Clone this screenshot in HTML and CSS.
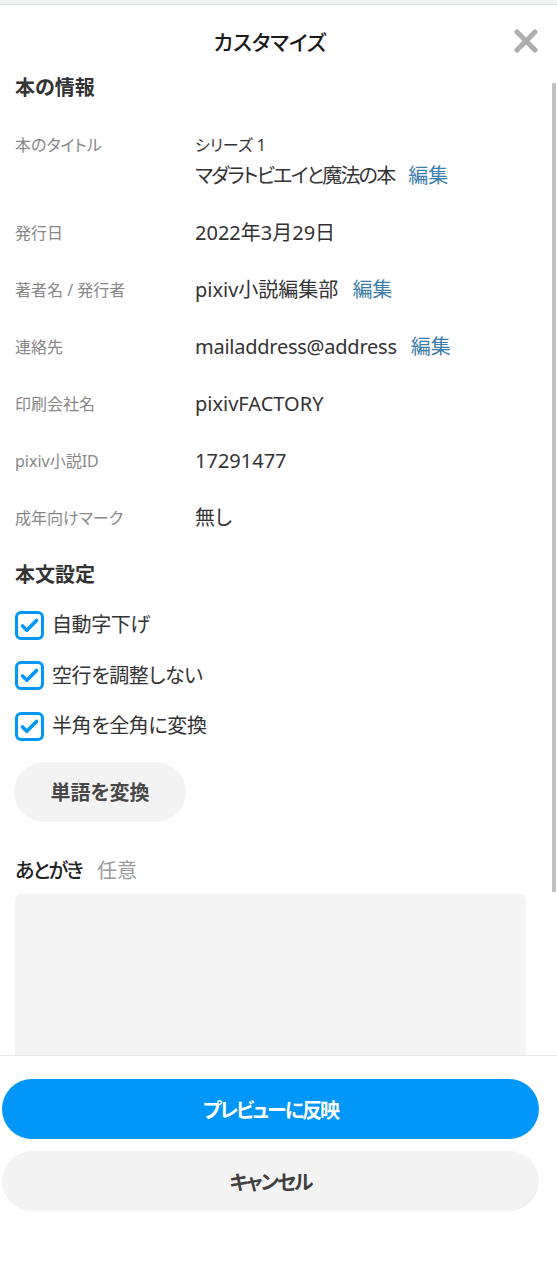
FILE: index.html
```html
<!DOCTYPE html>
<html lang="ja">
<head>
<meta charset="utf-8">
<title>カスタマイズ</title>
<link rel="stylesheet" href="styles.css">
</head>
<body>
<div class="topband"></div>
<div class="modal">
  <header class="modal-header">
    <span></span>
    <h1 class="modal-title">カスタマイズ</h1>
    <button class="close-btn" aria-label="閉じる">
      <svg width="26" height="24" viewBox="0 0 26 24"><path d="M4 3 L22 21 M22 3 L4 21" stroke="#adadad" stroke-width="5" stroke-linecap="round" fill="none"/></svg>
    </button>
  </header>
  <main class="modal-body">
    <div class="scroll-thumb"></div>
    <h2 class="section-title">本の情報</h2>
    <dl class="info">
      <div class="info-row">
        <dt class="info-label">本のタイトル</dt>
        <dd class="info-value">
          <div class="series">シリーズ 1</div>
          <div class="title-line"><span class="kana-tight">マダラトビエイと魔法の本</span><a class="edit">編集</a></div>
        </dd>
      </div>
      <div class="info-row">
        <dt class="info-label">発行日</dt>
        <dd class="info-value">2022年3月29日</dd>
      </div>
      <div class="info-row">
        <dt class="info-label">著者名 / 発行者</dt>
        <dd class="info-value">pixiv小説編集部<a class="edit">編集</a></dd>
      </div>
      <div class="info-row">
        <dt class="info-label">連絡先</dt>
        <dd class="info-value"><span class="latin-tight">mailaddress@address</span><a class="edit">編集</a></dd>
      </div>
      <div class="info-row">
        <dt class="info-label">印刷会社名</dt>
        <dd class="info-value">pixivFACTORY</dd>
      </div>
      <div class="info-row">
        <dt class="info-label">pixiv小説ID</dt>
        <dd class="info-value">17291477</dd>
      </div>
      <div class="info-row">
        <dt class="info-label">成年向けマーク</dt>
        <dd class="info-value">無し</dd>
      </div>
    </dl>

    <h2 class="section-title section-gap">本文設定</h2>
    <ul class="checks">
      <li class="check-row">
        <span class="checkbox"><svg width="23" height="23" viewBox="0 0 23 23"><path d="M4.5 12 L8.8 16.2 L18.5 6.5" stroke="#0096fa" stroke-width="3.6" stroke-linecap="round" stroke-linejoin="round" fill="none"/></svg></span>
        <span class="check-text">自動字下げ</span>
      </li>
      <li class="check-row">
        <span class="checkbox"><svg width="23" height="23" viewBox="0 0 23 23"><path d="M4.5 12 L8.8 16.2 L18.5 6.5" stroke="#0096fa" stroke-width="3.6" stroke-linecap="round" stroke-linejoin="round" fill="none"/></svg></span>
        <span class="check-text">空行を調整しない</span>
      </li>
      <li class="check-row">
        <span class="checkbox"><svg width="23" height="23" viewBox="0 0 23 23"><path d="M4.5 12 L8.8 16.2 L18.5 6.5" stroke="#0096fa" stroke-width="3.6" stroke-linecap="round" stroke-linejoin="round" fill="none"/></svg></span>
        <span class="check-text">半角を全角に変換</span>
      </li>
    </ul>
    <button class="pill pill-small">単語を変換</button>

    <h2 class="afterword-title"><span class="kana-tight">あとがき</span><span class="optional">任意</span></h2>
    <textarea class="afterword"></textarea>
  </main>
  <footer class="modal-footer">
    <button class="pill pill-primary">プレビューに反映</button>
    <button class="pill pill-secondary">キャンセル</button>
  </footer>
</div>
</body>
</html>
```

FILE: styles.css
```css
* { box-sizing: border-box; }

html, body {
  margin: 0;
  padding: 0;
  height: 100%;
}

body {
  font-family: "Noto Sans", "Noto Sans CJK JP", sans-serif;
  font-feature-settings: "palt";
  color: #333333;
  background: #ffffff;
  display: flex;
  flex-direction: column;
  overflow: hidden;
}

.topband {
  height: 5px;
  flex: none;
  background: #f1f2f2;
  border-bottom: 1px solid #e2e3e3;
}

.modal {
  flex: 1;
  min-height: 0;
  display: flex;
  flex-direction: column;
}

.modal-header {
  flex: none;
  height: 64px;
  padding: 23px 0 0 0;
  display: grid;
  grid-template-columns: 1fr auto 1fr;
  align-items: start;
}

.modal-title {
  margin: 0 0 0 -17px;
  font-size: 21px;
  line-height: 28px;
  font-weight: 500;
  color: #1a1a1a;
}

.close-btn {
  justify-self: end;
  margin: 1px 18px 0 0;
  padding: 0;
  width: 26px;
  height: 24px;
  border: none;
  background: none;
  display: flex;
}

.modal-body {
  flex: 1;
  min-height: 0;
  overflow: hidden;
  position: relative;
  padding: 5px 31px 0 15px;
}

.scroll-thumb {
  position: absolute;
  right: 1px;
  top: 14px;
  width: 4px;
  height: 809px;
  background: #c1c1c1;
}

.section-title {
  margin: 0 0 14px;
  font-size: 20px;
  line-height: 28px;
  font-weight: 700;
  color: #333333;
}

.section-gap {
  margin-top: 15px;
  margin-bottom: 11px;
}

.info {
  margin: 0;
}

.info-row {
  display: grid;
  grid-template-columns: 180px 1fr;
  padding: 15px 0 14px;
}

.info-label {
  font-size: 16px;
  line-height: 28px;
  color: #878787;
}

.info-value {
  margin: 0;
  font-size: 20px;
  line-height: 28px;
  color: #333333;
}

.series {
  font-size: 16px;
  line-height: 28px;
}

.title-line {
  margin-top: 3px;
}

.kana-tight {
  letter-spacing: -1.8px;
}

.latin-tight {
  letter-spacing: -0.25px;
}

.edit {
  color: #3d7daa;
  margin-left: 14px;
  cursor: pointer;
}

.checks {
  list-style: none;
  margin: 0;
  padding: 0;
}

.check-row {
  height: 50.5px;
  display: flex;
  align-items: center;
  gap: 8px;
}

.checkbox {
  width: 29px;
  height: 29px;
  border: 3px solid #0096fa;
  border-radius: 6px;
  display: flex;
  align-items: center;
  justify-content: center;
  flex: none;
}

.check-text {
  font-size: 20px;
  line-height: 28px;
  color: #333333;
  letter-spacing: -0.4px;
}

.pill {
  border: none;
  border-radius: 30px;
  height: 60px;
  font-family: inherit;
  font-feature-settings: "palt";
  font-size: 20px;
  font-weight: 700;
  cursor: pointer;
}

.pill-small {
  margin: 10px 0 0 -1px;
  width: 172px;
  background: #f3f3f3;
  color: #474747;
}

.afterword-title {
  margin: 35px 0 9px;
  font-size: 20px;
  line-height: 28px;
  font-weight: 500;
  color: #222222;
}

.optional {
  margin-left: 15px;
  font-weight: 400;
  color: #9a9a9a;
}

.afterword {
  display: block;
  width: 100%;
  height: 320px;
  border: none;
  border-radius: 6px;
  background: #f4f4f4;
  resize: none;
}

.modal-footer {
  flex: none;
  height: 208px;
  border-top: 1px solid #e6e6e6;
  padding: 23px 18px 0 2px;
  display: flex;
  flex-direction: column;
  gap: 12px;
}

.pill-primary {
  width: 100%;
  background: #0096fa;
  color: #ffffff;
  letter-spacing: -2px;
}

.pill-secondary {
  width: 100%;
  background: #f3f3f3;
  color: #3f3f3f;
  letter-spacing: -2px;
}
```
